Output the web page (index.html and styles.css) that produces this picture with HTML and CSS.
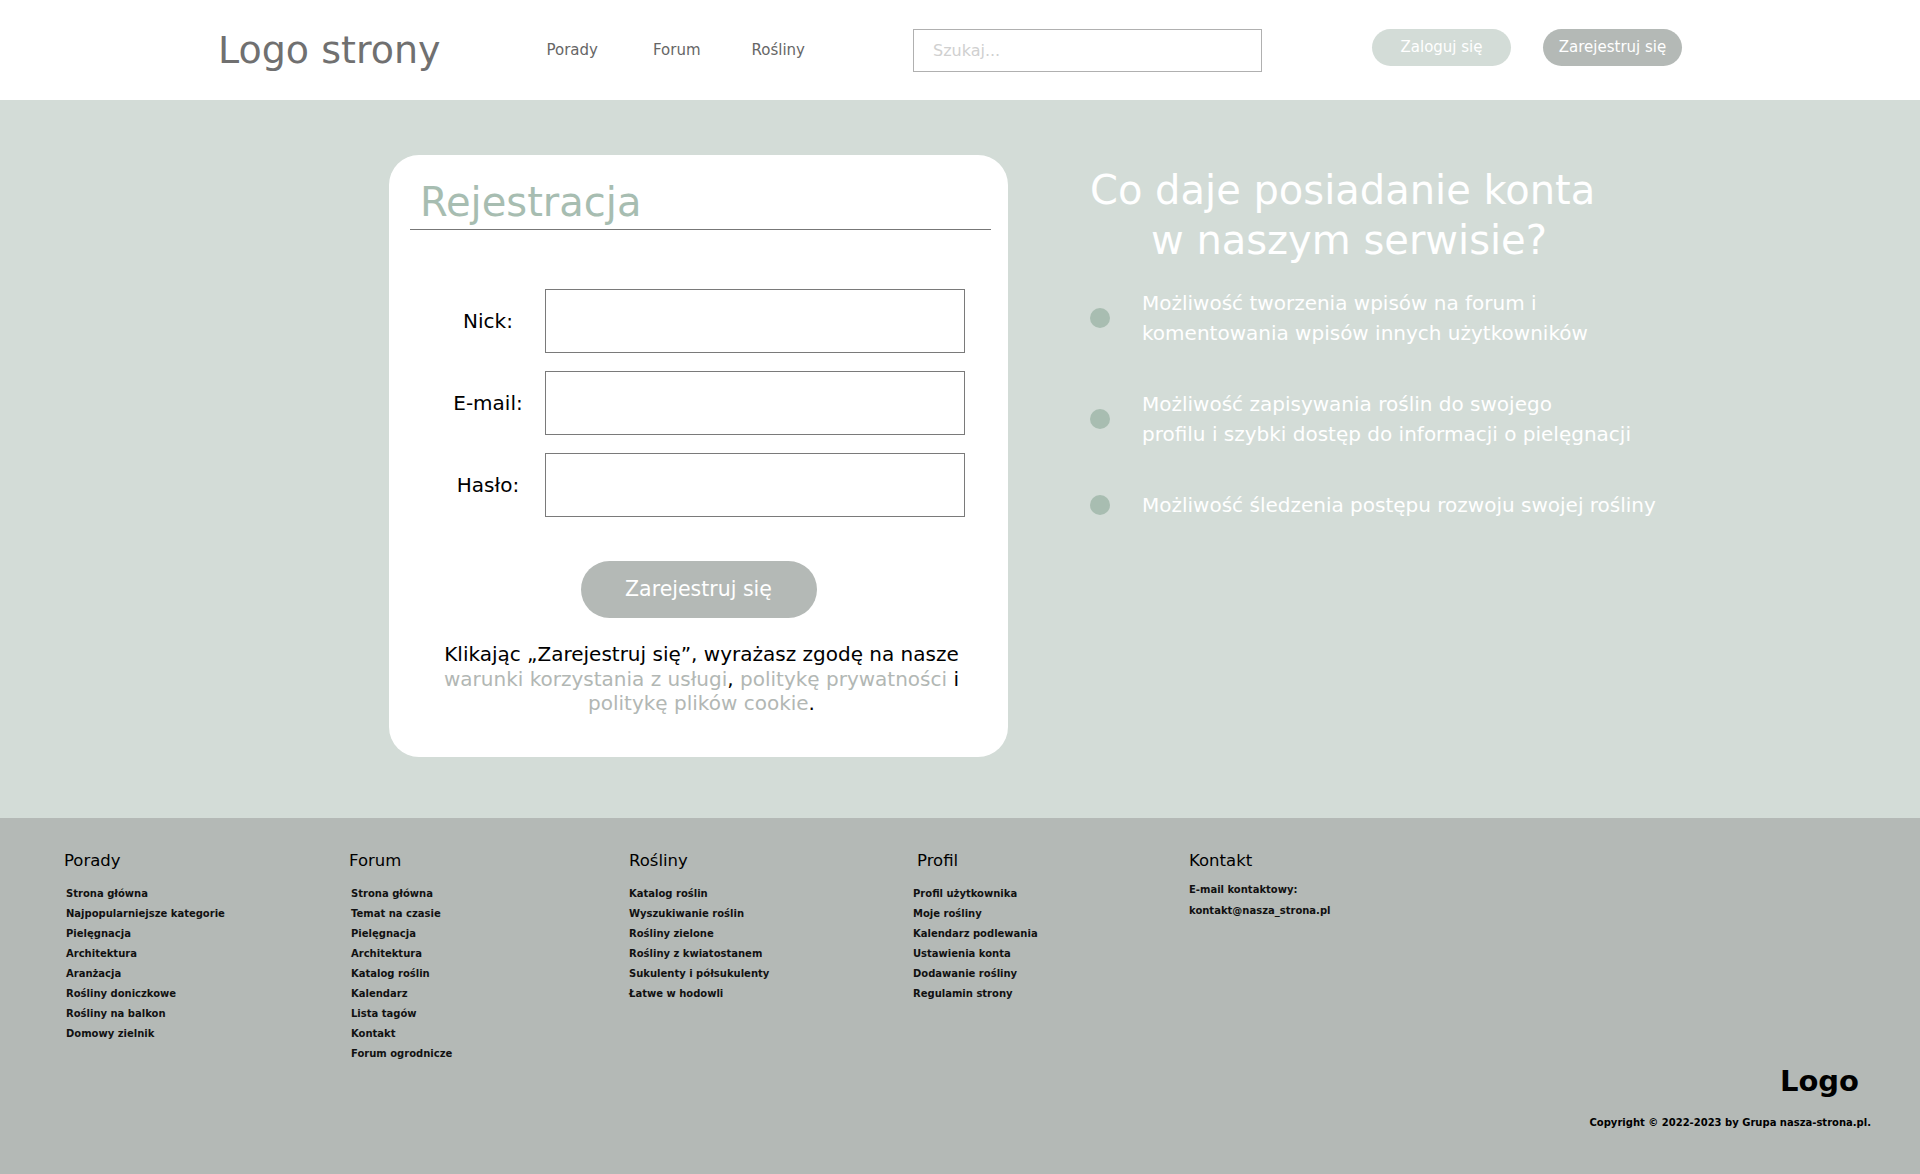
FILE: index.html
```html
<!DOCTYPE html>
<html lang="pl">
<head>
<meta charset="utf-8">
<title>Rejestracja</title>
<link rel="stylesheet" href="styles.css">
</head>
<body>
<header class="site-header">
  <a class="logo" href="#">Logo strony</a>
  <nav class="main-nav">
    <a class="nav-link" href="#">Porady</a>
    <a class="nav-link nav-link-mid" href="#">Forum</a>
    <a class="nav-link" href="#">Rośliny</a>
  </nav>
  <input class="search" type="text" placeholder="Szukaj...">
  <div class="auth">
    <a class="pill pill-login" href="#">Zaloguj się</a>
    <a class="pill pill-register" href="#">Zarejestruj się</a>
  </div>
</header>

<main class="main">
  <section class="card">
    <h1 class="card-title">Rejestracja</h1>
    <form class="form">
      <div class="row">
        <label class="label" for="nick">Nick:</label>
        <input class="field" id="nick" type="text">
      </div>
      <div class="row">
        <label class="label" for="email">E-mail:</label>
        <input class="field" id="email" type="email">
      </div>
      <div class="row">
        <label class="label" for="pass">Hasło:</label>
        <input class="field" id="pass" type="password">
      </div>
      <button class="submit" type="button">Zarejestruj się</button>
    </form>
    <p class="terms">Klikając „Zarejestruj się”, wyrażasz zgodę na nasze<br><a href="#">warunki korzystania z usługi</a>, <a href="#">politykę prywatności</a> i<br><a href="#">politykę plików cookie</a>.</p>
  </section>

  <section class="benefits">
    <h2 class="benefits-title">Co daje posiadanie konta<br>&nbsp;w naszym serwisie?</h2>
    <ul class="benefit-list">
      <li class="benefit"><span class="dot"></span><span class="benefit-text">Możliwość tworzenia wpisów na forum i<br>komentowania wpisów innych użytkowników</span></li>
      <li class="benefit"><span class="dot"></span><span class="benefit-text">Możliwość zapisywania roślin do swojego<br>profilu i szybki dostęp do informacji o pielęgnacji</span></li>
      <li class="benefit"><span class="dot"></span><span class="benefit-text">Możliwość śledzenia postępu rozwoju swojej rośliny</span></li>
    </ul>
  </section>
</main>

<footer class="footer">
  <div class="footer-cols">
    <div class="fcol fcol-indent">
      <h3 class="fhead">Porady</h3>
      <ul class="flist">
        <li>Strona główna</li>
        <li>Najpopularniejsze kategorie</li>
        <li>Pielęgnacja</li>
        <li>Architektura</li>
        <li>Aranżacja</li>
        <li>Rośliny doniczkowe</li>
        <li>Rośliny na balkon</li>
        <li>Domowy zielnik</li>
      </ul>
    </div>
    <div class="fcol fcol-indent">
      <h3 class="fhead">Forum</h3>
      <ul class="flist">
        <li>Strona główna</li>
        <li>Temat na czasie</li>
        <li>Pielęgnacja</li>
        <li>Architektura</li>
        <li>Katalog roślin</li>
        <li>Kalendarz</li>
        <li>Lista tagów</li>
        <li>Kontakt</li>
        <li>Forum ogrodnicze</li>
      </ul>
    </div>
    <div class="fcol">
      <h3 class="fhead">Rośliny</h3>
      <ul class="flist">
        <li>Katalog roślin</li>
        <li>Wyszukiwanie roślin</li>
        <li>Rośliny zielone</li>
        <li>Rośliny z kwiatostanem</li>
        <li>Sukulenty i półsukulenty</li>
        <li>Łatwe w hodowli</li>
      </ul>
    </div>
    <div class="fcol fcol-profil">
      <h3 class="fhead">Profil</h3>
      <ul class="flist">
        <li>Profil użytkownika</li>
        <li>Moje rośliny</li>
        <li>Kalendarz podlewania</li>
        <li>Ustawienia konta</li>
        <li>Dodawanie rośliny</li>
        <li>Regulamin strony</li>
      </ul>
    </div>
    <div class="fcol fcol-contact">
      <h3 class="fhead">Kontakt</h3>
      <ul class="flist">
        <li>E-mail kontaktowy:</li>
        <li>kontakt@nasza_strona.pl</li>
      </ul>
    </div>
  </div>
  <div class="footer-bottom">
    <div class="flogo">Logo</div>
    <div class="copy">Copyright © 2022-2023 by Grupa nasza-strona.pl.</div>
  </div>
</footer>
</body>
</html>
```

FILE: styles.css
```css
* { box-sizing: border-box; }

html, body {
  margin: 0;
  padding: 0;
}

body {
  font-family: "DejaVu Sans", Verdana, sans-serif;
  color: #000;
  background: #fff;
}

a { text-decoration: none; color: inherit; }

/* ---------- header ---------- */
.site-header {
  height: 100px;
  background: #fff;
  display: flex;
  align-items: center;
  padding-left: 218px;
}

.logo {
  font-size: 38px;
  color: #707070;
  line-height: 1;
  margin-right: 106px;
}

.main-nav {
  display: flex;
  gap: 51px;
  font-size: 15px;
  color: #666;
  margin-right: 108px;
}

.nav-link-mid { margin-left: 4px; }

.search {
  width: 349px;
  height: 43px;
  border: 1px solid #b0b0b0;
  padding: 0 19px;
  font-family: "DejaVu Sans", Verdana, sans-serif;
  font-size: 16px;
  outline: none;
  margin-right: 110px;
}

.search::placeholder { color: #d0d0d0; }

.auth {
  display: flex;
  gap: 32px;
  margin-bottom: 6px;
}

.pill {
  width: 139px;
  height: 37px;
  border-radius: 19px;
  display: flex;
  align-items: center;
  justify-content: center;
  font-size: 15px;
  color: #fff;
}

.pill-login { background: #d3dcd7; }
.pill-register { background: #b4b9b6; }

/* ---------- main ---------- */
.main {
  background: #d3dcd7;
  height: 718px;
  display: flex;
  align-items: flex-start;
  padding: 55px 0 0 389px;
}

.card {
  width: 619px;
  background: #fff;
  border-radius: 30px;
  padding: 24px 0 41px;
}

.card-title {
  margin: 0 17px 0 21px;
  padding: 0 0 3px 10px;
  font-size: 40px;
  font-weight: normal;
  line-height: 1.164;
  color: #a7bdb1;
  border-bottom: 1px solid #777;
}

.form {
  display: flex;
  flex-direction: column;
  padding-top: 59px;
}

.row {
  display: flex;
  align-items: center;
  padding-left: 42px;
  margin-bottom: 18px;
}

.row:last-of-type { margin-bottom: 0; }

.label {
  width: 114px;
  text-align: center;
  font-size: 20px;
}

.field {
  width: 420px;
  height: 64px;
  border: 1px solid #7a7a7a;
  outline: none;
  background: #fff;
}

.submit {
  align-self: center;
  margin-top: 44px;
  width: 236px;
  height: 57px;
  border: none;
  border-radius: 29px;
  background: #b4b9b6;
  color: #fff;
  font-family: "DejaVu Sans", Verdana, sans-serif;
  font-size: 20.5px;
  padding: 0;
  cursor: pointer;
}

.terms {
  margin: 24.5px 0 0;
  padding-left: 6px;
  text-align: center;
  font-size: 20px;
  line-height: 24.5px;
}

.terms a { color: #b2b7b4; }

/* ---------- benefits ---------- */
.benefits {
  margin-left: 82px;
  padding-top: 10px;
  color: #fff;
}

.benefits-title {
  display: inline-block;
  margin: 0;
  font-size: 40px;
  font-weight: normal;
  line-height: 50px;
  text-align: center;
}

.benefit-list {
  list-style: none;
  margin: 22.5px 0 0;
  padding: 0;
  display: flex;
  flex-direction: column;
  gap: 40px;
}

.benefit {
  display: flex;
  align-items: center;
  gap: 32px;
}

.dot {
  width: 20px;
  height: 20px;
  border-radius: 50%;
  background: #a8bdb1;
  flex: none;
}

.benefit-text {
  font-size: 20px;
  line-height: 30.6px;
}

/* ---------- footer ---------- */
.footer {
  background: #b4b9b6;
  height: 356px;
  padding: 33px 49px 0 64px;
}

.footer-cols {
  display: grid;
  grid-template-columns: 285px 280px 284px 276px 1fr;
}

.fhead {
  margin: 0;
  font-size: 16.5px;
  font-weight: normal;
  line-height: 20px;
  color: #000;
}

.flist {
  list-style: none;
  margin: 13px 0 0;
  padding: 0;
  font-size: 10px;
  font-weight: bold;
  line-height: 20px;
  color: #111;
}

.fcol-indent .flist { padding-left: 2px; }
.fcol-profil .fhead { padding-left: 4px; }
.fcol-contact .flist { margin-top: 8px; line-height: 21px; }

.footer-bottom {
  display: flex;
  flex-direction: column;
  align-items: flex-end;
  margin-top: 0;
}

.flogo {
  font-size: 29px;
  font-weight: bold;
  line-height: 34px;
  margin-right: 12px;
}

.copy {
  margin-top: 18px;
  font-size: 10px;
  font-weight: bold;
  line-height: 14px;
}
```
